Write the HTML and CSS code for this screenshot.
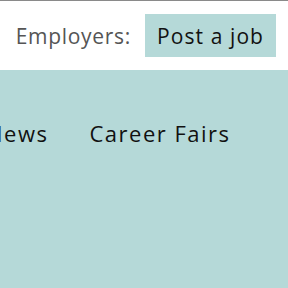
FILE: index.html
```html
<!DOCTYPE html>
<html>
<head>
<meta charset="utf-8">
<link rel="stylesheet" href="styles.css">
</head>
<body>
<header class="topbar">
  <span class="employers">Employers:</span>
  <a class="post-btn" href="#">Post a job</a>
</header>
<nav class="mainnav">
  <a class="nav-item" href="#">News</a>
  <a class="nav-item" href="#">Career Fairs</a>
</nav>
</body>
</html>
```
FILE: styles.css
```css
html, body {
  margin: 0;
  padding: 0;
  height: 100%;
  overflow: hidden;
}
body {
  font-family: "Open Sans", "Noto Sans", sans-serif;
  background: #b5d9d8;
}
.topbar {
  box-sizing: border-box;
  height: 70px;
  background: #ffffff;
  border-top: 1px solid #8a8a8a;
  display: flex;
  align-items: center;
  justify-content: flex-end;
  padding-right: 12px;
  gap: 14px;
}
.employers {
  font-size: 21px;
  color: #555555;
  letter-spacing: 0.7px;
}
.post-btn {
  box-sizing: border-box;
  width: 131px;
  height: 43px;
  background: #b5d9d8;
  color: #111111;
  text-decoration: none;
  font-size: 21px;
  display: flex;
  align-items: center;
  justify-content: center;
  letter-spacing: 1.1px;
}
.mainnav {
  display: flex;
  gap: 41px;
  margin-left: -14px;
  padding-top: 48px;
}
.nav-item {
  font-size: 22px;
  color: #111111;
  text-decoration: none;
  letter-spacing: 1.5px;
}
```
